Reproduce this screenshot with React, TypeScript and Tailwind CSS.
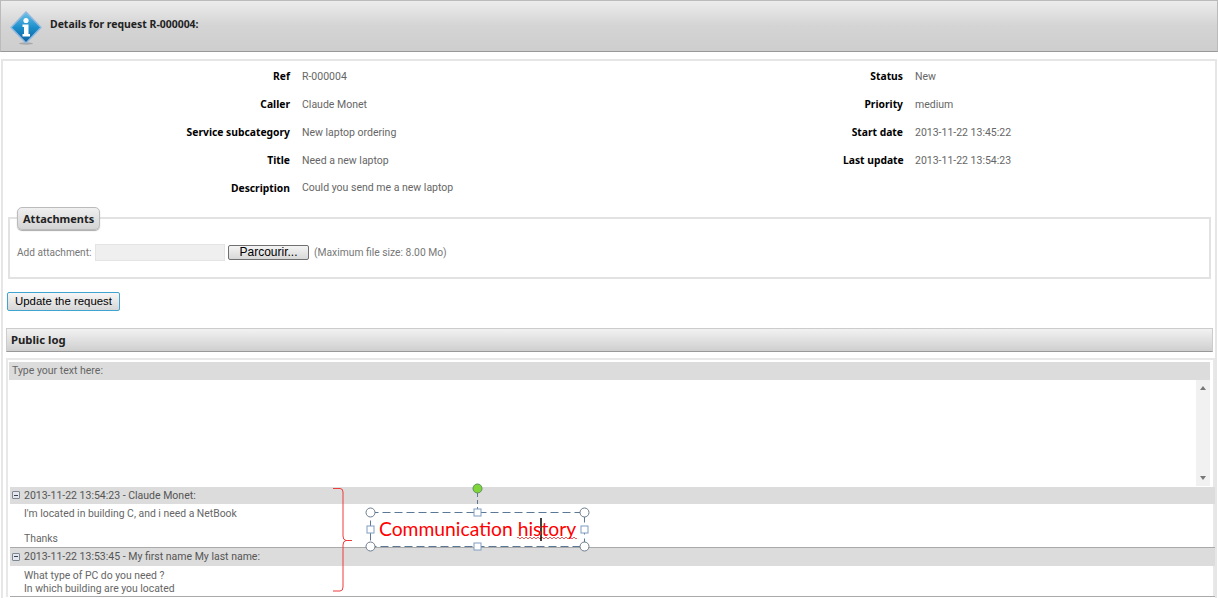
const leftRows = [
  ["Ref", "R-000004"],
  ["Caller", "Claude Monet"],
  ["Service subcategory", "New laptop ordering"],
  ["Title", "Need a new laptop"],
  ["Description", "Could you send me a new laptop"],
];

const rightRows = [
  ["Status", "New"],
  ["Priority", "medium"],
  ["Start date", "2013-11-22 13:45:22"],
  ["Last update", "2013-11-22 13:54:23"],
];

const InfoIcon = () => (
  <svg width="34" height="40" viewBox="0 0 34 40">
    <defs>
      <linearGradient id="diamond" x1="0" y1="0" x2="0" y2="1">
        <stop offset="0" stopColor="#6fc3ea" />
        <stop offset="0.5" stopColor="#1c8fca" />
        <stop offset="1" stopColor="#0b5f9e" />
      </linearGradient>
    </defs>
    <ellipse cx="17" cy="37.5" rx="7" ry="1.2" fill="#a8a8a8" />
    <g transform="translate(0 5)">
      <path d="M17 1 L32 16.5 L17 32 L2 16.5 Z" fill="url(#diamond)" stroke="#8fb8e0" strokeLinejoin="round" strokeWidth="1.5" />
      <circle cx="17" cy="9.5" r="2.6" fill="#fff" />
      <path d="M13.5 13.5 H19.5 V23 H21 V25.5 H13.5 V23 H15 V16 H13.5 Z" fill="#fff" />
    </g>
  </svg>
);

const DetailRows = ({ rows, labelWidth }: { rows: string[][]; labelWidth: string }) => (
  <div className="flex flex-col">
    {rows.map(([label, value]) => (
      <div key={label} className="flex h-[27.8px] items-center gap-[12px]">
        <span className={`${labelWidth} shrink-0 whitespace-nowrap text-right font-['Noto_Sans',sans-serif] text-[10.3px] font-bold text-black`}>{label}</span>
        <span className="text-[#666]">{value}</span>
      </div>
    ))}
  </div>
);

const CollapseIcon = () => (
  <span className="flex h-[8px] w-[8px] items-center justify-center rounded-[1px] border border-[#7d8794] bg-[#e4e8ee]">
    <span className="h-px w-[4px] bg-[#39424e]" />
  </span>
);

const LogEntry = ({ head, lines, headHeight, height, lineHeight }: { head: string; lines: string[]; headHeight: string; height: string; lineHeight: string }) => (
  <div>
    <div className={`${headHeight} flex items-center gap-[4px] bg-[#dcdcdc] pl-[2px] text-[#555]`}>
      <CollapseIcon />
      <span className="text-[10.5px]">{head}</span>
    </div>
    <div className={`${height} border-b border-[#aaa] pl-[14px] pt-[3px] text-[10.4px] leading-[13px] text-[#666]`}>
      {lines.map((line, i) => (
        <div key={i} className={lineHeight}>{line}</div>
      ))}
    </div>
  </div>
);

const Annotation = () => (
  <div className="absolute left-[330px] top-[480px] h-[118px] w-[270px]">
    <svg className="absolute inset-0" width="270" height="118" viewBox="0 0 270 118" fill="none">
      <path d="M3 8.5 H10 Q13 8.5 13 12 V56 Q13 60 16 60.5 H22 H16 Q13 61 13 65 V107 Q13 111 10 111 H3" stroke="#ee3b3b" strokeWidth="1" />
      <path d="M147.5 13 V32" stroke="#5a7896" strokeWidth="1" strokeDasharray="4 3" />
      <rect x="40.5" y="32.5" width="214" height="34" stroke="#5a7896" strokeWidth="1" strokeDasharray="8 4" />
      <circle cx="147.5" cy="8.5" r="4.5" fill="#7ed63a" stroke="#5f8f5f" />
      {[[40.5, 32.5], [254.5, 32.5], [40.5, 66.5], [254.5, 66.5]].map(([x, y]) => (
        <circle key={`${x}-${y}`} cx={x} cy={y} r="4.5" fill="#fff" stroke="#6d7c8c" strokeWidth="1" />
      ))}
      {[[147.5, 32.5], [40.5, 49.5], [254.5, 49.5], [147.5, 66.5]].map(([x, y]) => (
        <rect key={`${x}-${y}`} x={x - 3.5} y={y - 3.5} width="7" height="7" fill="#fff" stroke="#7f9cc0" strokeWidth="1" />
      ))}
      <path d="M187 58 q1 -2 2 0 t2 0 t2 0 t2 0 t2 0 t2 0 t2 0 t2 0 t2 0 t2 0 t2 0 t2 0 t2 0 t2 0 t2 0 t2 0 t2 0 t2 0 t2 0 t2 0 t2 0 t2 0 t2 0 t2 0 t2 0 t2 0 t2 0 t2 0 t2 0 t2 0" stroke="#e33" strokeWidth="0.8" />
      <path d="M211 38 V61" stroke="#000" strokeWidth="1.5" />
    </svg>
    <span className="absolute left-[49px] top-[37px] font-['Lato',sans-serif] text-[19.3px] leading-[24px] whitespace-nowrap text-[#ff0000]">
      Communication history
    </span>
  </div>
);

export default function App() {
  return (
    <div className="relative h-[598px] w-[1218px] overflow-hidden bg-white font-['Roboto',sans-serif] text-[10.5px]">
      <header className="flex h-[52px] items-center gap-[7px] border border-[#bbb] border-b-[#999] bg-gradient-to-b from-[#ececec] via-[#d4d4d4] to-[#cecece] pl-[8px]">
        <InfoIcon />
        <h1 className="mb-[2px] font-['Noto_Sans',sans-serif] text-[10.45px] font-bold text-[#222]">Details for request R-000004:</h1>
      </header>

      <main className="mx-px mt-[7px] h-[539px] border-x-2 border-t-2 border-[#e6e6e6] pt-[2.15px]">
        <section className="flex">
          <div className="w-[840px]">
            <DetailRows rows={leftRows} labelWidth="w-[287px]" />
          </div>
          <DetailRows rows={rightRows} labelWidth="w-[60px]" />
        </section>

        <fieldset className="ml-[5px] mt-[4.85px] h-[72px] w-[1203px] border-2 border-[#e2e2e2]">
          <legend className="ml-[7px] rounded-[5px] border border-[#bbb] bg-gradient-to-b from-[#f0f0f0] to-[#d4d4d4] px-[5px] py-[3px] font-['Noto_Sans',sans-serif] text-[11px] leading-[15px] font-bold text-[#222] shadow-[0_1px_1px_#aaa]">
            Attachments
          </legend>
          <div className="ml-[7px] mt-[14px] flex items-center text-[#777]">
            <span className="w-[75px] whitespace-nowrap text-[10.1px]">Add attachment:</span>
            <span className="ml-[3px] h-[17px] w-[130px] border border-[#e4e4e4] bg-[#efefef]" />
            <button className="ml-[3px] h-[15px] w-[81px] rounded-[2px] border border-[#707070] bg-gradient-to-b from-[#f4f4f4] to-[#d8d8d8] font-['Liberation_Sans',sans-serif] text-[12px] leading-[13px] text-black">
              Parcourir...
            </button>
            <span className="ml-[5px] text-[10.3px]">(Maximum file size: 8.00 Mo)</span>
          </div>
        </fieldset>

        <button className="ml-[4px] mt-[13px] block h-[19px] w-[113px] rounded-[2px] border border-[#3fa4cf] bg-gradient-to-b from-[#f6f6f6] to-[#d6d6d6] font-['Liberation_Sans',sans-serif] text-[11.4px] leading-[15px] text-black">
          Update the request
        </button>

        <h2 className="ml-[3px] mt-[17px] flex h-[24px] w-[1207px] items-center border border-[#ccc] border-b-[#999] bg-gradient-to-b from-[#f2f2f2] to-[#cfcfcf] pl-[4px] pt-px font-['Noto_Sans',sans-serif] text-[11.3px] font-bold text-[#222]">
          Public log
        </h2>

        <section className="ml-[3px] mt-[6px] w-[1209px] border-x-2 border-t-2 border-[#e8e8e8] pl-[1px] pt-[2px]">
          <div className="flex h-[18px] w-[1201px] items-center bg-[#dcdcdc] pl-[3px] text-[#666]">Type your text here:</div>
          <div className="flex h-[106px] w-[1201px] justify-end">
            <div className="flex w-[14px] flex-col items-center justify-between bg-[#f1f1f1] py-[6px]">
              <span className="h-0 w-0 border-x-[3px] border-b-[4px] border-x-transparent border-b-[#777]" />
              <span className="h-0 w-0 border-x-[3px] border-t-[4px] border-x-transparent border-t-[#777]" />
            </div>
          </div>
          <div className="ml-px mt-px w-[1205px]">
            <LogEntry
              head="2013-11-22 13:54:23 - Claude Monet:"
              lines={["I'm located in building C, and i need a NetBook", "", "Thanks"]}
              headHeight="h-[17px]"
              height="h-[44px]"
              lineHeight="h-[12.5px]"
            />
            <LogEntry
              head="2013-11-22 13:53:45 - My first name My last name:"
              lines={["What type of PC do you need ?", "In which building are you located"]}
              headHeight="h-[18px]"
              height="h-[31px]"
              lineHeight="h-[13px]"
            />
          </div>
        </section>
      </main>

      <Annotation />
    </div>
  );
}
